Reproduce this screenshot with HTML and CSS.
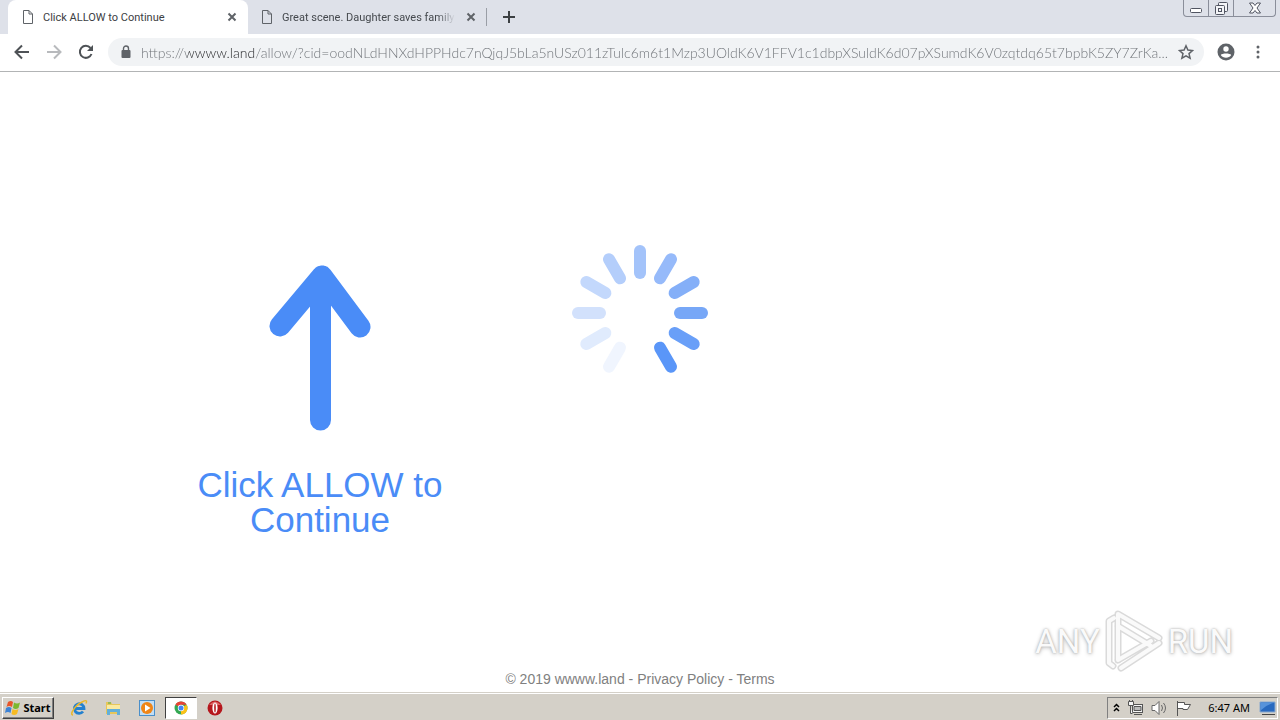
FILE: index.html
```html
<!DOCTYPE html>
<html lang="en">
<head>
    <meta charset="utf-8">
    <title>Click ALLOW to Continue</title>
    <link rel="stylesheet" href="styles.css">
</head>
<body>
    <header class="browser">
        <div class="tab-strip">
            <div class="tab active">
                <svg class="tab-icon" width="12" height="16" viewBox="0 0 12 16"><path d="M1.500 1.500h5.500l3.500 3.500v9.500h-9zM7 1.500v3.500h3.500" fill="none" stroke="#5f6368"/></svg>
                <span class="tab-title">Click ALLOW to Continue</span>
                <button class="tab-close" aria-label="Close tab"><svg width="10" height="10" viewBox="0 0 10 10"><path d="M1.500 1.500l7 7M8.500 1.500l-7 7" stroke="#5f6368" stroke-width="2"/></svg></button>
            </div>
            <div class="tab">
                <svg class="tab-icon" width="12" height="16" viewBox="0 0 12 16"><path d="M1.500 1.500h5.500l3.500 3.500v9.500h-9zM7 1.500v3.500h3.500" fill="none" stroke="#5f6368"/></svg>
                <span class="tab-title">Great scene. Daughter saves family</span>
                <button class="tab-close" aria-label="Close tab"><svg width="10" height="10" viewBox="0 0 10 10"><path d="M1.500 1.500l7 7M8.500 1.500l-7 7" stroke="#5f6368" stroke-width="2"/></svg></button>
            </div>
            <button class="new-tab" aria-label="New tab"><svg width="12" height="12" viewBox="0 0 12 12"><path d="M6 0v12M0 6h12" stroke="#3c4043" stroke-width="2"/></svg></button>
            <div class="window-buttons">
                <button class="win-btn" aria-label="Minimize"><svg width="12" height="12" viewBox="0 0 12 12"><rect x=".5" y="6.500" width="11" height="4" rx="1" fill="#fff" stroke="#505461"/></svg></button>
                <button class="win-btn" aria-label="Restore"><svg width="13" height="13" viewBox="0 0 13 13" fill="#f3f4f7" stroke="#505461"><rect x="3.500" y=".5" width="9" height="9" rx="1"/><rect x=".5" y="3.500" width="9" height="9" rx="1"/><rect x="3.500" y="6.500" width="3" height="3"/></svg></button>
                <button class="win-btn wide" aria-label="Close"><svg width="12" height="12" viewBox="0 0 12 12"><path d="M.5 1h3.500l2 2.500 2-2.500h3.500l-3.500 5 3.500 5h-3.500l-2-2.500-2 2.500h-3.500l3.500-5z" fill="#fff" stroke="#505461"/></svg></button>
            </div>
        </div>
        <div class="toolbar">
            <button class="tool-btn" aria-label="Back"><svg width="16" height="16" viewBox="0 0 16 16"><path d="M15 8H2M8 1.500L1.500 8 8 14.500" fill="none" stroke="#4e5256" stroke-width="2"/></svg></button>
            <button class="tool-btn" aria-label="Forward" disabled><svg width="16" height="16" viewBox="0 0 16 16"><path d="M1 8h13M8 1.500L14.500 8 8 14.500" fill="none" stroke="#b8babd" stroke-width="2"/></svg></button>
            <button class="tool-btn" aria-label="Reload"><svg width="16" height="16" viewBox="0 0 16 16"><path d="M13.500 10A6 6 0 1 1 12.500 4" fill="none" stroke="#4e5256" stroke-width="2"/><path d="M15 1v6H9z" fill="#4e5256"/></svg></button>
            <div class="address">
                <svg width="10" height="14" viewBox="0 0 10 14"><path d="M2.500 6V3.500a2.500 2.500 0 0 1 5 0V6" fill="none" stroke="#5f6368" stroke-width="1.400"/><rect x=".5" y="5" width="9" height="8" rx="1" fill="#5f6368"/></svg>
                <input class="url" type="text" aria-label="Address" spellcheck="false" value="https://wwww.land/allow/?cid=oodNLdHNXdHPPHdc7nQjqJ5bLa5nUSz011zTulc6m6t1Mzp3UOldK6V1FFV1c1dbpXSuldK6d07pXSumdK6V0zqtdq65t7bpbK5ZY7ZrKa...">
                <button class="star" aria-label="Bookmark this page"><svg width="16" height="16" viewBox="0 0 16 16"><path d="M8 1.800l1.900 4.300 4.600.4-3.500 3.100 1.100 4.600L8 11.800l-4.100 2.400L5 9.600 1.500 6.500l4.600-.4z" fill="none" stroke="#5f6368" stroke-width="1.500"/></svg></button>
            </div>
            <button class="tool-btn" aria-label="Profile"><svg width="18" height="18" viewBox="0 0 18 18"><circle cx="9" cy="9" r="8.500" fill="#5f6368"/><circle cx="9" cy="6" r="2.700" fill="#fff"/><path d="M3.800 12c1-2 9.400-2 10.400 0-2 3.600-8.400 3.600-10.400 0z" fill="#fff"/></svg></button>
            <button class="tool-btn" aria-label="Menu"><svg width="4" height="14" viewBox="0 0 4 14" fill="#5f6368"><circle cx="2" cy="2" r="1.500"/><circle cx="2" cy="7" r="1.500"/><circle cx="2" cy="12" r="1.500"/></svg></button>
        </div>
    </header>

    <main class="page">
        <div class="content">
            <div class="hint">
                <svg width="102" height="168" viewBox="0 0 102 168"><path d="M53 12L11 62M53 12l38 51M51.500 14v142" fill="none" stroke="#4a8cf7" stroke-width="21" stroke-linecap="round" stroke-linejoin="round"/></svg>
                <h1 class="hint-text">Click ALLOW to Continue</h1>
            </div>
            <svg class="spinner" width="136" height="136" viewBox="-68 -68 136 136" stroke-width="12" stroke-linecap="round">
                <path d="M0-62v22" stroke="#a3c3fa"/>
                <path d="M0-62v22" stroke="#96bafa" transform="rotate(30)"/>
                <path d="M0-62v22" stroke="#84aff8" transform="rotate(60)"/>
                <path d="M0-62v22" stroke="#77a7f7" transform="rotate(90)"/>
                <path d="M0-62v22" stroke="#699ff8" transform="rotate(120)"/>
                <path d="M0-62v22" stroke="#5a96f8" transform="rotate(150)"/>
                <path d="M0-62v22" stroke="#f0f5fe" transform="rotate(210)"/>
                <path d="M0-62v22" stroke="#e0ebfd" transform="rotate(240)"/>
                <path d="M0-62v22" stroke="#d2e1fc" transform="rotate(270)"/>
                <path d="M0-62v22" stroke="#c3d8fc" transform="rotate(300)"/>
                <path d="M0-62v22" stroke="#b4cefb" transform="rotate(330)"/>
            </svg>
        </div>
        <footer class="footer">© 2019 wwww.land - <a href="#">Privacy Policy</a> - <a href="#">Terms</a></footer>
        <div class="watermark">
            <span>ANY</span>
            <svg width="58" height="64" viewBox="0 0 58 64" fill="none" stroke-linejoin="round" stroke-linecap="round">
                <path d="M8 57l-4-3V12l5-3M13 51V5l41 24M13 17l33 20M13 51l33-19M54 34L16 59" stroke="#dadada" stroke-width="7"/>
                <path d="M8 57l-4-3V12l5-3M13 51V5l41 24M13 17l33 20M13 51l33-19M54 34L16 59" stroke="#fafafa" stroke-width="4"/>
            </svg>
            <span>RUN</span>
        </div>
    </main>

    <div class="taskbar">
        <button class="start">
            <svg width="17" height="16" viewBox="0 0 17 16"><path d="M3 2q3-2 5 0L7 7Q4 5 1.500 7z" fill="#e8562a"/><path d="M9 2.500q3 2 6 0L13.500 8q-3 2-5.500 0z" fill="#7cb82f"/><path d="M1 8q3-2 5.500 0L5.500 13Q3 11 0 13z" fill="#3c83d6"/><path d="M7.500 9q3 2 6 0L12 14q-3 2-5.500 0z" fill="#f7bb22"/></svg>
            Start
        </button>
        <nav class="tasks">
            <button class="task" aria-label="Internet Explorer"><svg width="18" height="18" viewBox="0 0 18 18" fill="none"><path d="M5 9.500h9a4.800 4.800 0 1 0-1 3" stroke="#2481cf" stroke-width="2.800"/><path d="M3 16C-1 16 5 6 13 2.500c4-2 4 0 3 2" stroke="#e9b72c" stroke-width="1.500"/></svg></button>
            <button class="task" aria-label="Explorer"><svg width="18" height="18" viewBox="0 0 18 18"><path d="M2 3h5l1 2h8v10H2z" fill="#e7c65a"/><path d="M3 6h13v6H3z" fill="#faeaa0"/><path d="M3 10h13v6h-3v-3H6v3H3z" fill="#63afd9"/><path d="M4 4h3" stroke="#4caf50"/></svg></button>
            <button class="task" aria-label="Media Player"><svg width="18" height="18" viewBox="0 0 18 18"><rect x="1.500" y="1.500" width="15" height="15" fill="#c2def5" stroke="#4a8fca"/><circle cx="9" cy="9" r="6" fill="#f08516"/><path d="M7 5.500v7L12.500 9z" fill="#fff"/></svg></button>
            <button class="task current" aria-label="Chrome"><svg width="14" height="14" viewBox="0 0 14 14"><circle cx="7" cy="7" r="6.500" fill="#33a852"/><path d="M7 7L1.400 3.700A6.500 6.500 0 0 1 12.600 3.700H7z" fill="#e94235"/><path d="M7 7l5.600-3.300A6.500 6.500 0 0 1 7 13.500z" fill="#fbc116"/><circle cx="7" cy="7" r="3.200" fill="#fff"/><circle cx="7" cy="7" r="2.500" fill="#4285f4"/></svg></button>
            <button class="task" aria-label="Opera"><svg width="16" height="16" viewBox="0 0 16 16"><circle cx="8" cy="8" r="7.500" fill="#b5171d"/><path d="M2 5q6-7 12 0" fill="#dd6464"/><ellipse cx="8" cy="8" rx="2.600" ry="5.500" fill="#fff"/><ellipse cx="8" cy="8" rx=".8" ry="4.500" fill="#b5171d"/></svg></button>
        </nav>
        <div class="tray">
            <svg width="7" height="10" viewBox="0 0 7 10"><path d="M1 4l2.500-2.500L6 4M1 8l2.500-2.500L6 8" fill="none" stroke="#000" stroke-width="1.500"/></svg>
            <svg width="17" height="16" viewBox="0 0 17 16" fill="#f5f5f5" stroke="#555"><rect x="5.500" y="4.500" width="10" height="8"/><path d="M7 6.500h7v4H7z" fill="#bbb"/><path d="M7 14.500h8M1.500 1.500h5v4h-5zM3.500 5.500v8h2M2.500 0v2M5.500 0v2"/></svg>
            <svg width="17" height="16" viewBox="0 0 17 16" fill="#fff" stroke="#666"><path d="M1 5.500h3l4-4v13l-4-4H1z"/><path d="M10.500 5q2 3 0 6M12.500 3q4 5 0 10" fill="none"/></svg>
            <svg width="17" height="16" viewBox="0 0 17 16" fill="#fff" stroke="#555"><path d="M2.500 1v15M2.500 2.500h7v2h6l-3 5H8v-1H2.500z"/></svg>
            <time class="clock">6:47 AM</time>
            <svg width="17" height="14" viewBox="0 0 17 14"><path d="M1 1h15v10H1z" fill="#2869bf" stroke="#88a9cf"/><path d="M1.500 1.500h14q-8 2-14 8z" fill="#5793db"/><path d="M3 13.500h13" stroke="#444"/></svg>
        </div>
    </div>
</body>
</html>
```
FILE: styles.css
```css
* {
    box-sizing: border-box;
}

body {
    margin: 0;
    min-height: 100vh;
    display: flex;
    flex-direction: column;
    background-color: #fff;
    font-family: "Noto Sans", "Open Sans", sans-serif;
    font-size: 11px;
}

svg {
    display: block;
    flex: none;
}

button {
    display: flex;
    align-items: center;
    justify-content: center;
    border: none;
    padding: 0;
    background: none;
    font: inherit;
}

/* Browser window */
.browser {
    border-bottom: 1px solid #b2b4b5;
}

.tab-strip {
    display: flex;
    height: 34px;
    padding-left: 8px;
    background-color: #dee1e9;
}

.tab {
    display: flex;
    align-items: center;
    width: 239px;
    padding: 0 11px 0 13px;
    color: #45494e;
}

.tab.active {
    width: 240px;
    padding-left: 14px;
    background-color: #fff;
    border-radius: 8px 8px 0 0;
    color: #3c4043;
}

.tab:not(.active) {
    background: linear-gradient(#9a9ea6, #9a9ea6) right center / 1px 18px no-repeat;
}

.tab-title {
    flex: 1;
    margin: 0 11px 0 9px;
    font-family: Roboto, sans-serif;
    white-space: nowrap;
    overflow: hidden;
}

.tab:not(.active) .tab-title {
    -webkit-mask-image: linear-gradient(to right, #000 90%, transparent);
    mask-image: linear-gradient(to right, #000 90%, transparent);
}

.new-tab {
    width: 44px;
}

.window-buttons {
    display: flex;
    height: 17px;
    margin-left: auto;
    margin-right: 4px;
    border: 1px solid #8a8e9a;
    border-top: none;
    border-radius: 0 0 4px 4px;
}

.win-btn {
    width: 25px;
    border-right: 1px solid #8a8e9a;
}

.win-btn.wide {
    width: 41px;
    border-right: none;
}

.toolbar {
    display: flex;
    align-items: center;
    height: 37px;
    padding: 0 6px 1px;
}

.tool-btn {
    width: 32px;
    height: 32px;
}

.address {
    flex: 1;
    display: flex;
    align-items: center;
    height: 28px;
    margin: 0 6px;
    padding: 0 10px 0 13px;
    border-radius: 14px;
    background-color: #f1f3f5;
}

.url {
    flex: 1;
    min-width: 0;
    margin: 0 8px 0 10px;
    padding: 0;
    border: none;
    outline: none;
    font-family: Lato, sans-serif;
    font-size: 14px;
    font-weight: 300;
    /* host name is darker than the rest of the address */
    background: linear-gradient(to right, #6c7075 46px, #202124 46px, #202124 115px, #6c7075 115px);
    -webkit-background-clip: text;
    background-clip: text;
    color: transparent;
}

/* Page */
.page {
    flex: 1;
    display: flex;
    flex-direction: column;
    position: relative;
    font-family: "Liberation Sans", Arial, sans-serif;
}

.content {
    flex: 1;
    display: grid;
    grid-template-columns: 1fr 2fr 2fr 3fr;
    align-items: start;
    padding-top: 173px;
}

.hint {
    grid-column: 2;
    display: flex;
    flex-direction: column;
    align-items: center;
    padding-top: 19px;
}

.hint-text {
    margin: 35px 0 0;
    font-size: 35px;
    line-height: 35px;
    font-weight: normal;
    text-align: center;
    color: #4a8cf7;
}

.spinner {
    grid-column: 3;
    justify-self: center;
}

.footer {
    padding-bottom: 5px;
    font-size: 14px;
    line-height: 16px;
    text-align: center;
    color: #808080;
}

.footer a {
    color: inherit;
    text-decoration: none;
}

.watermark {
    position: absolute;
    right: 47px;
    bottom: 19px;
    display: flex;
    align-items: center;
    gap: 5px;
    font-family: Roboto, sans-serif;
    font-size: 33px;
    color: #fafafa;
    text-shadow: 0 0 2px #aaa, 0 1px 4px #bbb;
}

/* Taskbar */
.taskbar {
    display: flex;
    align-items: center;
    height: 28px;
    padding: 2px 2px 0;
    border-top: 1px solid #d4d0c8;
    box-shadow: inset 0 1px #fff;
    background-color: #d4d0c8;
}

.start {
    gap: 1px;
    width: 52px;
    height: 22px;
    border: 1px solid;
    border-color: #fff #404040 #404040 #fff;
    box-shadow: inset -1px -1px #808080;
    font-size: 11px;
    font-weight: bold;
}

.tasks {
    display: flex;
    gap: 2px;
    margin-left: 9px;
}

.task {
    width: 32px;
    height: 22px;
}

.task.current {
    border: 1px solid;
    border-color: #404040 #fff #fff #404040;
    background-color: #fff;
}

.tray {
    display: flex;
    align-items: center;
    gap: 7px;
    height: 22px;
    margin-left: auto;
    padding: 0 1px 0 5px;
    border: 1px solid;
    border-color: #808080 #fff #fff #808080;
}

.clock {
    margin: 0 2px 0 9px;
    color: #000;
}
```
